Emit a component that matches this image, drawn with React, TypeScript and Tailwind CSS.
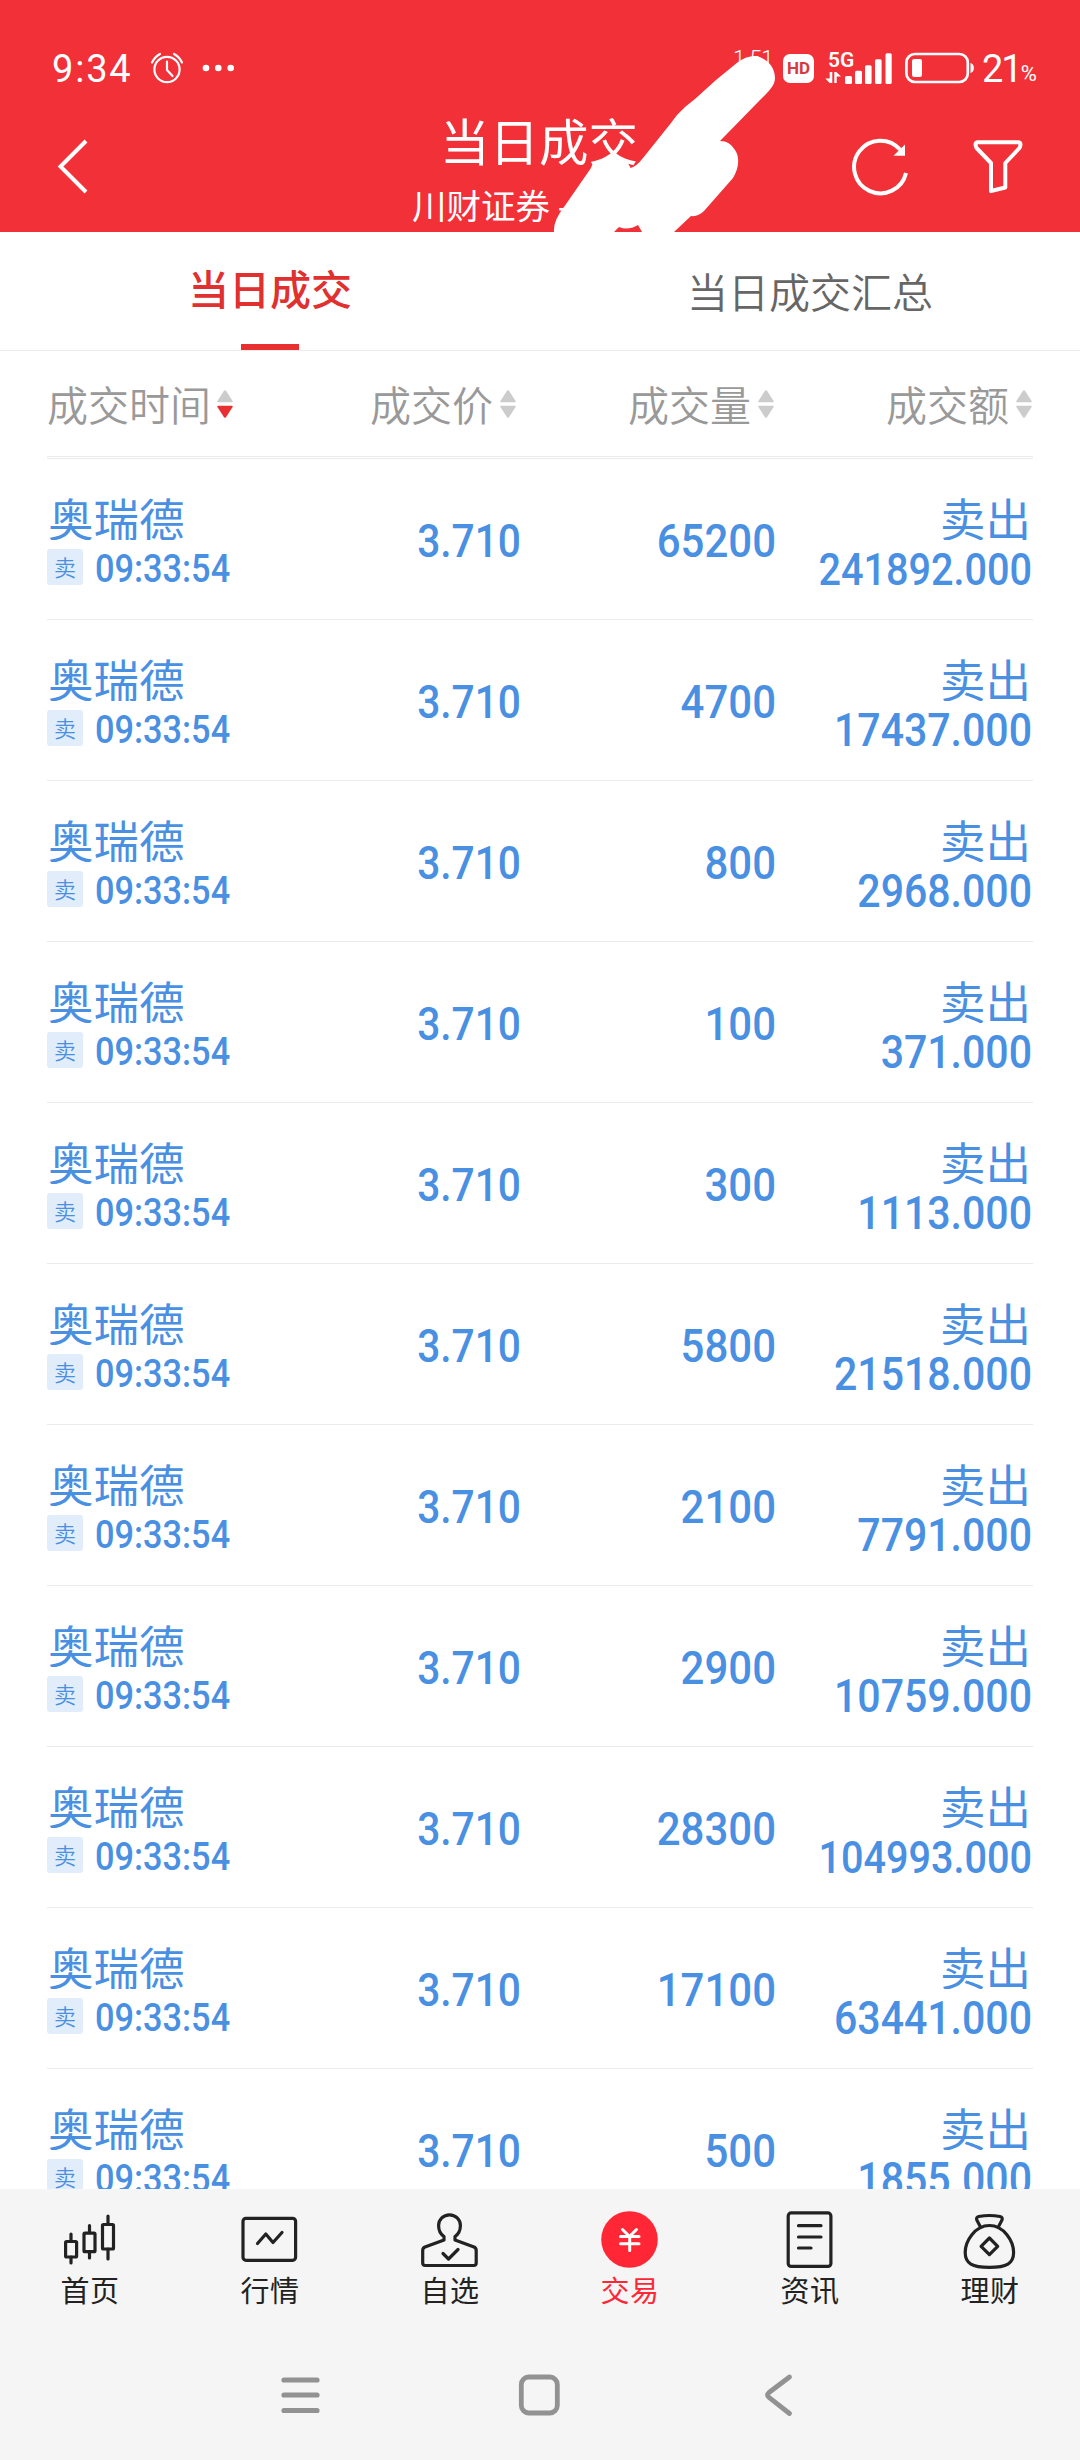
import type { ReactNode } from 'react';

const trades = [
  { price: '3.710', volume: '65200', amount: '241892.000' },
  { price: '3.710', volume: '4700', amount: '17437.000' },
  { price: '3.710', volume: '800', amount: '2968.000' },
  { price: '3.710', volume: '100', amount: '371.000' },
  { price: '3.710', volume: '300', amount: '1113.000' },
  { price: '3.710', volume: '5800', amount: '21518.000' },
  { price: '3.710', volume: '2100', amount: '7791.000' },
  { price: '3.710', volume: '2900', amount: '10759.000' },
  { price: '3.710', volume: '28300', amount: '104993.000' },
  { price: '3.710', volume: '17100', amount: '63441.000' },
  { price: '3.710', volume: '500', amount: '1855.000' },
];

function StatusBar() {
  return (
    <div className="flex h-[100px] items-center pt-[36px] pl-[52px] text-white font-['Roboto',sans-serif]">
      <span className="w-[98px] pt-[2px] text-[38px] leading-none tracking-[1.8px]">9:34</span>
      <svg className="h-8 w-[34px]" viewBox="0 0 34 32" fill="none" stroke="white" strokeWidth="2.2" strokeLinecap="round">
        <circle cx="17" cy="17.5" r="12.6" />
        <path d="M17 9.5v8.5l5.5 6M2 10.5q3-6 8-8.5M32 10.5q-3-6-8-8.5" />
      </svg>
      <svg className="ml-[18px] h-2 w-8" viewBox="0 0 32 8" fill="white">
        <circle cx="4" cy="4" r="3.3" />
        <circle cx="16.3" cy="4" r="3.3" />
        <circle cx="28.7" cy="4" r="3.3" />
      </svg>
      <span className="ml-[499px] w-[50px] self-start pt-[12px] text-[22px] leading-none font-light tracking-[-0.5px]">1.51</span>
      <span className="flex h-[29px] w-[31px] items-center justify-center rounded-[7px] bg-white text-[17px] leading-none font-bold text-[#d8393c]">
        HD
      </span>
      <div className="relative ml-[11px] h-8 w-[68px]">
        <span className="absolute -top-[2px] left-[3px] text-[21px] leading-none font-semibold">5G</span>
        <svg className="h-8 w-[68px]" viewBox="0 0 68 32" fill="white">
          <rect x="20" y="24" width="7" height="8" rx="1.5" />
          <rect x="30" y="18.7" width="7" height="13.3" rx="1.5" />
          <rect x="40" y="13.3" width="6.6" height="18.7" rx="1.5" />
          <rect x="50" y="7.3" width="6.6" height="24.7" rx="1.5" />
          <rect x="60.5" y="1.3" width="6.2" height="30.7" rx="1.5" />
          <path d="M4.7 20h2.6v11h-2.6L.3 26.5h4.4zM9.3 20h2l4.7 4.5h-4.3V31H9.3z" />
        </svg>
      </div>
      <svg className="ml-3 h-8 w-[70px]" viewBox="0 0 70 32">
        <rect x="1.4" y="2" width="61.4" height="28" rx="8.5" fill="none" stroke="white" strokeWidth="2.7" />
        <rect x="7" y="7" width="10" height="18" rx="2" fill="white" />
        <path d="M65.5 11q3.4 1 3.4 5t-3.4 5z" fill="white" />
      </svg>
      <span className="ml-[7px] pt-[2px] text-[38px] leading-none tracking-[-2px]">21</span>
      <span className="pt-[11px] text-[22px] leading-none">%</span>
    </div>
  );
}

function Header() {
  return (
    <header className="relative h-[232px] overflow-hidden bg-[#f23038] text-white">
      <StatusBar />
      <div className="grid h-[132px] grid-cols-[300px_480px_300px]">
        <div className="flex items-center pl-[55px]">
          <svg className="h-[60px] w-[36px]" viewBox="0 0 36 60" fill="none" stroke="white" strokeWidth="4">
            <path d="M31 4L5.5 29.5 31 55" />
          </svg>
        </div>
        <div className="flex flex-col items-center">
          <h1 className="mr-[2px] pt-[10px] text-[49.5px] leading-[60px] font-normal">当日成交</h1>
          <p className="mt-[4px] w-[256px] text-[34.5px] leading-[60px] whitespace-nowrap">川财证券 -</p>
        </div>
        <div className="flex items-center pl-[70px]">
          <svg className="h-[64px] w-[64px] shrink-0" viewBox="0 0 64 64" fill="none" stroke="white" strokeWidth="4">
            <path d="M56 38A26.3 26.3 0 1 1 50 14.5" />
            <path d="M55 9.5v11.2H43.5z" fill="white" stroke="none" />
          </svg>
          <svg className="ml-[56px] h-[64px] w-[56px] shrink-0" viewBox="0 0 56 64" fill="none" stroke="white" strokeWidth="4" strokeLinejoin="round">
            <path d="M8 7.3h40q2.500 0 2.500 2.500-.3 2.500-1.500 3.700L35.300 28v24.500L21 56v-28L7 13.500q-1.200-1.200-1.500-3.700 0-2.500 2.500-2.500z" />
          </svg>
        </div>
      </div>
      {/* marker scribble over the account number */}
      <svg className="absolute inset-0 h-[232px] w-[1080px]" viewBox="0 0 1080 232" fill="white">
        <path d="M755 56C764 57 775 65 775 78C775 86 768 92 760 100L720 141C727 141 731 144 735 150C740 157 739 168 733 178L704 211Q698 217 691 216L674 232H642L638 225Q628 231 619 227L614 232H554Q553 221 564 207L591 168Q592 163 597 161L612 155.5Q620 156 626 160Q628 163 630.6 168Q637 166 643 158L671 123Q677 114 685 107L695 99L716 80L738 62Q746 56 755 56Z" />
      </svg>
    </header>
  );
}

function SortArrows({ active }: { active?: boolean }) {
  return (
    <svg className="mt-[2px] h-7 w-4" viewBox="0 0 16 28" fill="#cccccc">
      <path d="M7 .8q1-1 2 0l6.600 10.200q.6 1.300-.8 1.300H1.200q-1.400 0-.8-1.300z" />
      <path d="M7 27.200q1 1 2 0l6.600-10.200q.6-1.300-.8-1.300H1.200q-1.400 0-.8 1.300z" fill={active ? '#e93030' : '#cccccc'} />
    </svg>
  );
}

function HeadCell({ label, active }: { label: string; active?: boolean }) {
  return (
    <div className={active ? 'flex items-center gap-[6px]' : 'flex items-center justify-end gap-[7px]'}>
      <span>{label}</span>
      <SortArrows active={active} />
    </div>
  );
}

function TradeRow({ price, volume, amount }: { price: string; volume: string; amount: string }) {
  const long = amount.length > 9;
  return (
    <div className="grid h-[161px] shrink-0 grid-cols-[211px_263px_255px_256px] border-b border-[#ebebeb] text-[#4a90e2]">
      <div className="pt-[33px]">
        <div className="h-[48px] overflow-hidden pl-px text-[45.5px] leading-[50px] whitespace-nowrap">奥瑞德</div>
        <div className="mt-[9px] flex h-9 items-center">
          <span className="flex h-9 w-9 items-center justify-center rounded-[3px] bg-[#e1edfb] pb-[3px] text-[22px] leading-none font-[350]">卖</span>
          <span className="ml-[12px] origin-left scale-x-[0.88] pt-[3px] text-[39px] leading-9 font-medium font-['Roboto',sans-serif]">09:33:54</span>
        </div>
      </div>
      <div className="origin-right scale-x-[0.885] pt-[54px] text-right text-[46px] leading-[56px] font-medium font-['Roboto',sans-serif]">{price}</div>
      <div className="origin-right scale-x-[0.912] pt-[54px] text-right text-[46px] leading-[56px] font-medium font-['Roboto',sans-serif]">{volume}</div>
      <div className="pt-[33px] text-right">
        <div className="h-[48px] overflow-hidden pr-px text-[45.5px] leading-[50px]">卖出</div>
        <div
          className={
            long
              ? "mt-[8px] origin-right scale-x-[0.9] text-[44px] leading-[44px] font-medium font-['Roboto',sans-serif]"
              : "mt-[8px] origin-right scale-x-[0.902] text-[45.5px] leading-[44px] font-medium font-['Roboto',sans-serif]"
          }
        >
          {amount}
        </div>
      </div>
    </div>
  );
}

function TabItem({ label, active, children }: { label: string; active?: boolean; children: ReactNode }) {
  return (
    <div className={active ? 'flex w-[180px] flex-col items-center text-[#ff2736]' : 'flex w-[180px] flex-col items-center text-[#222222]'}>
      <svg
        className="mt-[21px] h-[60px] w-[60px]"
        viewBox="0 0 60 60"
        fill="none"
        stroke="currentColor"
        strokeWidth="3.2"
        strokeLinecap="round"
        strokeLinejoin="round"
      >
        {children}
      </svg>
      <span className="-mt-px text-[29px] leading-[40px] tracking-[0.5px]">{label}</span>
    </div>
  );
}

function TabBar() {
  return (
    <nav className="flex h-[151px]">
      <TabItem label="首页">
        <rect x="5.6" y="31.5" width="11" height="15.5" rx="1" />
        <rect x="24" y="23.2" width="11" height="18.5" rx="1" />
        <rect x="42.5" y="14.5" width="11" height="24.5" rx="1" />
        <path d="M11 24v7M11 47v6M29.5 15.5v7M29.5 42v6M48 6v8M48 39v10" />
      </TabItem>
      <TabItem label="行情">
        <rect x="3" y="8.3" width="52.6" height="42" rx="3" />
        <path d="M17.5 33.5L25.8 24l7.2 8.5 9-10" />
      </TabItem>
      <TabItem label="自选">
        <path d="M24 30v-3.500C19.500 23.500 18.600 20 18.600 15.500a10.900 10.700 0 0 1 21.800 0C40.400 20 39.500 23.500 35 26.500V30L54 37q2.200 1 2.200 3.500V53q0 2.500-2.500 2.500H5.200Q2.700 55.500 2.700 53V40.500Q2.700 38 5 37z" />
        <path d="M23 43.5l5.5 5.5 9.5-9.5" />
      </TabItem>
      <TabItem label="交易" active>
        <circle cx="29.5" cy="29.5" r="28.3" fill="currentColor" stroke="none" />
        <path d="M22.5 19.5l7 7 7-7M20.5 26.5h18.5M20.5 33.8h18.5M29.7 26.5v14" stroke="white" strokeWidth="3" />
      </TabItem>
      <TabItem label="资讯">
        <rect x="8.2" y="2.9" width="42.7" height="53.5" rx="3" />
        <path d="M18.5 15.7h22.5M18.5 27h22.5M18.5 38h12.5" />
      </TabItem>
      <TabItem label="理财">
        <path d="M29.4 15.5C15 15.5 5.200 31 5.200 42.500c0 11 7 14.800 24.200 14.800s24.200-3.800 24.200-14.800C53.600 31 43.800 15.500 29.400 15.500z" />
        <path d="M20.5 17l-3.700-7q-1-2.800 2-3.500 10.600-2 21.200 0 3 .7 2 3.500l-3.700 7" />
        <path d="M29.4 28l8.3 8.3-8.3 8.3-8.3-8.3z" />
      </TabItem>
    </nav>
  );
}

function SystemNav() {
  return (
    <div className="flex h-[109px] items-center justify-between pr-[279px] pl-[278px]">
      <svg className="h-11 w-11" viewBox="0 0 44 44" fill="none" stroke="#929292" strokeWidth="5.2" strokeLinecap="round">
        <path d="M6 7h33M6 22h33M6 37.5h33" />
      </svg>
      <svg className="h-11 w-11" viewBox="0 0 44 44" fill="none" stroke="#929292" strokeWidth="4.8">
        <rect x="3.3" y="4" width="36" height="36" rx="7.5" />
      </svg>
      <svg className="h-11 w-11" viewBox="0 0 44 44" fill="none" stroke="#929292" strokeWidth="4.8" strokeLinecap="round">
        <path d="M32.5 4L12 19.5q-3 2.5 0 5L32.5 40.5" />
      </svg>
    </div>
  );
}

export default function App() {
  return (
    <div className="flex h-[2460px] w-[1080px] flex-col overflow-hidden bg-white font-['Noto_Sans_CJK_SC',sans-serif]">
      <Header />

      <div className="flex h-[119px] border-b border-[#ebebeb]">
        <div className="flex w-1/2 flex-col items-center text-[#e0302f]">
          <span className="pt-[25px] text-[41px] leading-[60px] font-medium">当日成交</span>
          <span className="mt-auto h-[6px] w-[58px] bg-[#e93030]" />
        </div>
        <div className="flex w-1/2 justify-center text-[#666666]">
          <span className="pt-[28px] text-[41px] leading-[60px] font-[350]">当日成交汇总</span>
        </div>
      </div>

      <main className="flex h-[1838px] flex-col overflow-hidden px-[47px]">
        <div className="grid h-[106px] shrink-0 grid-cols-[211px_258px_258px_258px] border-b border-[#ebebeb] pb-[2px] text-[41px] leading-[60px] font-[350] text-[#999999]">
          <HeadCell label="成交时间" active />
          <HeadCell label="成交价" />
          <HeadCell label="成交量" />
          <HeadCell label="成交额" />
        </div>
        <div className="mt-px h-px shrink-0 bg-[#ebebeb]" />
        {trades.map((t, i) => (
          <TradeRow key={i} {...t} />
        ))}
      </main>

      <footer className="h-[271px] bg-[#f5f5f5]">
        <TabBar />
        <SystemNav />
      </footer>
    </div>
  );
}
